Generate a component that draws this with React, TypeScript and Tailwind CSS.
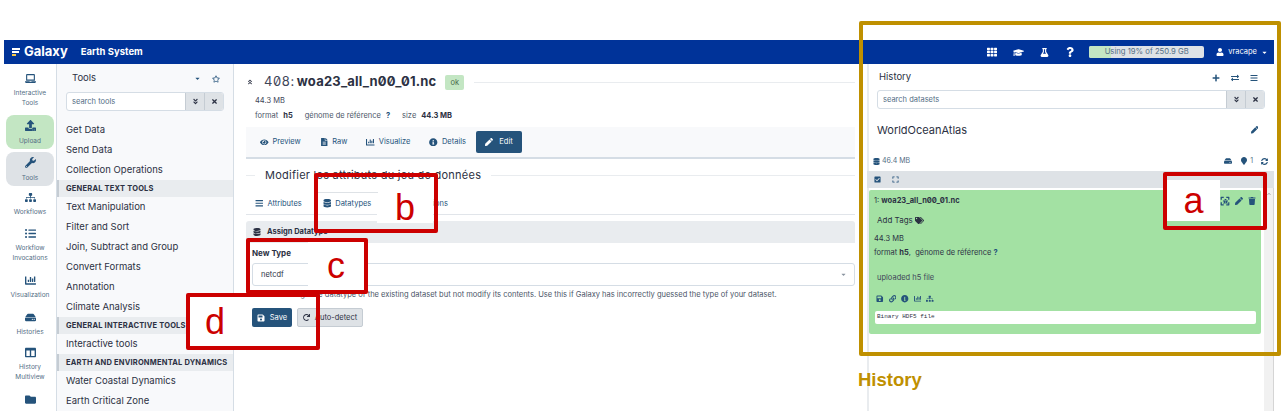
import type { ReactNode } from "react";
import {
  FaBars, FaChartBar, FaCheckSquare, FaChevronUp, FaColumns, FaDatabase, FaEye, FaFileAlt, FaFolder, FaGraduationCap, FaHdd, FaInfoCircle,
  FaLaptop, FaLink, FaMapMarker, FaPen, FaPlus, FaQuestion, FaRedo, FaSave, FaSitemap, FaSyncAlt, FaTags, FaTh, FaTimes, FaTrash, FaUndo,
  FaUpload, FaUser, FaListUl, FaRegStar, FaExchangeAlt, FaAngleDoubleDown, FaAngleDoubleUp, FaCaretDown, FaExpand, FaBug, FaFlask, FaWrench,
} from "react-icons/fa";

const toolRows: { label: string; section?: boolean }[] = [
  { label: "Get Data" },
  { label: "Send Data" },
  { label: "Collection Operations" },
  { label: "GENERAL TEXT TOOLS", section: true },
  { label: "Text Manipulation" },
  { label: "Filter and Sort" },
  { label: "Join, Subtract and Group" },
  { label: "Convert Formats" },
  { label: "Annotation" },
  { label: "Climate Analysis" },
  { label: "GENERAL INTERACTIVE TOOLS", section: true },
  { label: "Interactive tools" },
  { label: "EARTH AND ENVIRONMENTAL DYNAMICS", section: true },
  { label: "Water Coastal Dynamics" },
  { label: "Earth Critical Zone" },
];

function ActivityItem({ icon, lines, className = "" }: { icon: ReactNode; lines: string[]; className?: string }) {
  return (
    <div className={`mx-[2px] flex w-[48px] flex-col items-center rounded-[8px] text-[#25537b] ${className}`}>
      <span className="flex h-[14px] items-center text-[11px]">{icon}</span>
      <div className="mt-[3px] text-center text-[6.5px] leading-[10px] text-[#546e85]">
        {lines.map((line) => <div key={line}>{line}</div>)}
      </div>
    </div>
  );
}

function Tab({ icon, label, className = "" }: { icon: ReactNode; label: string; className?: string }) {
  return (
    <span className={`flex items-center gap-[4px] text-[7.5px] text-[#25537b] ${className}`}>
      <span className="text-[8.5px]">{icon}</span>
      {label}
    </span>
  );
}

function SearchBox({ placeholder }: { placeholder: string }) {
  return (
    <div className="flex h-[19px] overflow-hidden rounded-[3px] border border-[#d5dde5] bg-white">
      <span className="flex flex-1 items-center pl-[5px] text-[7.5px] text-[#546e85]">{placeholder}</span>
      <span className="flex w-[19px] items-center justify-center border-l border-[#c5ccd3] bg-[#dee2e6] text-[7px] text-[#2c3143]"><FaAngleDoubleDown /></span>
      <span className="flex w-[19px] items-center justify-center border-l border-[#c5ccd3] bg-[#dee2e6] text-[7px] text-[#2c3143]"><FaTimes /></span>
    </div>
  );
}

export default function App() {
  return (
    <div className="relative h-[411px] w-[1281px] overflow-hidden bg-white pl-[4px] pt-[40px] font-['Inter',sans-serif] text-[#2c3143]">
      <header className="flex h-[24px] w-[1270px] items-center bg-[#003399] text-white">
        <span className="ml-[8px] flex h-[8px] w-[8px] flex-col justify-between">
          <span className="h-[2px] w-[8px] bg-white" />
          <span className="h-[2px] w-[7px] bg-white" />
          <span className="h-[2px] w-[4px] bg-[#f7c948]" />
        </span>
        <span className="ml-[4px] text-[13px] font-bold">Galaxy</span>
        <span className="ml-[13px] text-[9.5px] font-bold">Earth System</span>
        <div className="ml-auto flex items-center">
          <FaTh className="text-[10px]" />
          <FaGraduationCap className="ml-[16px] text-[11px]" />
          <FaFlask className="ml-[16px] text-[9px]" />
          <FaQuestion className="ml-[16px] text-[10px]" />
          <div className="relative ml-[14px] flex h-[12px] w-[115px] items-center justify-center overflow-hidden rounded-[2px] bg-[#dee2e6] text-[7.7px] text-[#546e85]">
            <span className="absolute inset-y-0 left-0 w-[22px] bg-[#c3e6c3]" />
            <span className="relative">Using 19% of 250.9 GB</span>
          </div>
          <FaUser className="ml-[12px] text-[8px]" />
          <span className="ml-[4px] text-[7.5px]">vracape</span>
          <FaCaretDown className="ml-[4px] mr-[6px] text-[7px]" />
        </div>
      </header>

      <div className="flex h-[347px]">
        <nav className="w-[53px] border-r border-[#d5dde5] pt-[7px]">
          <ActivityItem icon={<FaLaptop />} lines={["Interactive", "Tools"]} />
          <ActivityItem icon={<FaUpload />} lines={["Upload"]} className="mt-[7px] h-[34px] justify-center bg-[#c3e6c3]" />
          <ActivityItem icon={<FaWrench />} lines={["Tools"]} className="mt-[3px] h-[34px] justify-center bg-[#dee2e6]" />
          <ActivityItem icon={<FaSitemap />} lines={["Workflows"]} className="mt-[4px]" />
          <ActivityItem icon={<FaListUl />} lines={["Workflow", "Invocations"]} className="mt-[9px]" />
          <ActivityItem icon={<FaChartBar />} lines={["Visualization"]} className="mt-[10px]" />
          <ActivityItem icon={<FaHdd />} lines={["Histories"]} className="mt-[10px]" />
          <ActivityItem icon={<FaColumns />} lines={["History", "Multiview"]} className="mt-[8px]" />
          <ActivityItem icon={<FaFolder />} lines={[]} className="mt-[10px]" />
        </nav>

        <aside className="w-[177px] border-r border-[#d5dde5] bg-[#f8f9fb]">
          <div className="flex h-[28px] items-center pl-[15px] pr-[13px] pt-[1px]">
            <span className="text-[9.5px]">Tools</span>
            <FaCaretDown className="ml-auto text-[7px] text-[#25537b]" />
            <FaRegStar className="ml-[11px] text-[8px] text-[#25537b]" />
          </div>
          <div className="ml-[9px] w-[158px]"><SearchBox placeholder="search tools" /></div>
          <div className="mt-[9px]">
            {toolRows.map((row) =>
              row.section ? (
                <div key={row.label} className="flex h-[17px] items-center whitespace-nowrap border-l-2 border-[#c5ccd3] bg-[#e9ecef] pl-[7px] text-[7.5px] font-bold tracking-[0.2px]">{row.label}</div>
              ) : (
                <div key={row.label} className="flex h-[20px] items-center pl-[9px] text-[9.5px]">{row.label}</div>
              )
            )}
          </div>
        </aside>

        <main className="w-[633px] px-[12px]">
          <div className="flex h-[36px] items-center">
            <FaAngleDoubleUp className="ml-[1px] text-[6px]" />
            <span className="ml-[11px] text-[13px] slashed-zero tracking-[0.6px] text-[#3f4659]">408:</span>
            <span className="ml-[2px] text-[13px] font-bold slashed-zero tracking-[0.2px]">woa23_all_n00_01.nc</span>
            <span className="ml-[9px] rounded-[2px] bg-[#c3e6c3] px-[5px] py-[3px] text-[7.5px] leading-[9px] text-[#4a6a4a]">ok</span>
            <span className="ml-[10px] h-px flex-1 bg-[#e9ecef]" />
          </div>
          <div className="-mt-[4px] ml-[9px] text-[7.5px] leading-[10px] text-[#3f4659]">44.3 MB</div>
          <div className="ml-[9px] mt-[5px] flex text-[7.5px] leading-[10px] text-[#4b5567]">
            <span>format</span><b className="ml-[5px] text-[#2c3143]">h5</b>
            <span className="ml-[12px]">génome de référence</span><b className="ml-[5px] text-[#25537b]">?</b>
            <span className="ml-[12px]">size</span><b className="ml-[5px] text-[#2c3143]">44.3 MB</b>
          </div>
          <div className="mt-[6px] flex h-[32px] items-center gap-[19px] border-b-2 border-[#d5dde5] bg-[#f8f9fb] pl-[14px]">
            <Tab icon={<FaEye />} label="Preview" />
            <Tab icon={<FaFileAlt />} label="Raw" />
            <Tab icon={<FaChartBar />} label="Visualize" />
            <Tab icon={<FaInfoCircle />} label="Details" />
            <span className="-ml-[9px] flex h-[22px] w-[46px] items-center justify-center gap-[6px] rounded-[2px] bg-[#25537b] text-[7.5px] text-white"><FaPen className="text-[8px]" />Edit</span>
          </div>
          <div className="mt-[8px] flex h-[17px] items-center">
            <span className="h-px w-[9px] bg-[#e9ecef]" />
            <span className="px-[10px] text-[11px] tracking-[0.25px]">Modifier les attributs du jeu de données</span>
            <span className="h-px flex-1 bg-[#e9ecef]" />
          </div>
          <div className="mt-[5px] flex h-[26px] items-center gap-[20px] border-b border-[#e1e5ea] pl-[9px] pt-[4px]">
            <Tab icon={<FaBars />} label="Attributes" />
            <Tab icon={<FaDatabase />} label="Datatypes" className="-mx-[6px] h-[22px] self-end border-x border-t border-[#dee2e6] px-[6px]" />
            <Tab icon={<FaUndo />} label="Permissions" />
          </div>
          <div className="mt-[6px] flex h-[22px] items-center gap-[6px] rounded-t-[3px] bg-[#e9ecef] pl-[7px] text-[7.5px] font-bold">
            <FaDatabase className="text-[8px]" />Assign Datatype
          </div>
          <div className="ml-[6px] mt-[5px] text-[8px] font-bold leading-[10px]">New Type</div>
          <div className="ml-[6px] mt-[5px] flex h-[23px] items-center justify-between rounded-[3px] border border-[#d5dde5] pl-[8px] pr-[7px] text-[7.5px]">
            netcdf <FaCaretDown className="text-[7px] text-[#8a94a0]" />
          </div>
          <p className="ml-[6px] mt-[4px] whitespace-nowrap text-[7.53px] leading-[10px] text-[#4b5567]">This will change the datatype of the existing dataset but not modify its contents. Use this if Galaxy has incorrectly guessed the type of your dataset.</p>
          <div className="ml-[6px] mt-[8px] flex gap-[5px]">
            <span className="flex h-[19px] w-[40px] items-center justify-center gap-[5px] rounded-[2px] bg-[#25537b] text-[7.5px] text-white"><FaSave className="text-[8px]" />Save</span>
            <span className="flex h-[19px] w-[66px] items-center justify-center gap-[5px] rounded-[2px] border border-[#c5ccd3] bg-[#dee2e6] text-[7.5px]"><FaRedo className="text-[7px]" />Auto-detect</span>
          </div>
        </main>

        <section className="relative w-[407px] border-l-2 border-[#e9ecef] pr-[10px]">
          <div className="flex h-[26px] items-center pl-[10px] pr-[6px] pt-[1px]">
            <span className="text-[9.5px]">History</span>
            <div className="ml-auto flex items-center gap-[11px] text-[8px] text-[#25537b]"><FaPlus /><FaExchangeAlt /><FaBars /></div>
          </div>
          <div className="ml-[8px] w-[388px]"><SearchBox placeholder="search datasets" /></div>
          <div className="flex h-[42px] items-center pl-[8px] pr-[6px] text-[11px]">
            WorldOceanAtlas
            <FaPen className="ml-auto text-[7.5px] text-[#25537b]" />
          </div>
          <div className="-mr-[4px] flex h-[20px] items-center pl-[4px] text-[7px] text-[#546e85]">
            <FaDatabase className="text-[#25537b]" /><span className="ml-[2px]">46.4 MB</span>
            <FaHdd className="ml-auto text-[8px] text-[#25537b]" />
            <FaMapMarker className="ml-[8px] text-[8px] text-[#25537b]" /><span className="ml-[2px]">1</span>
            <FaSyncAlt className="ml-[8px] text-[7px] text-[#25537b]" />
          </div>
          <div className="-ml-[2px] flex h-[17px] w-[407px] items-center gap-[11px] bg-[#dee2e6] pl-[7px] text-[7px] text-[#25537b]"><FaCheckSquare /><FaExpand /></div>

          <div className="mt-[2px] h-[144px] w-[392px] rounded-[2px] bg-[#a3e1a3] px-[5px] pt-[5px]">
            <div className="flex h-[12px] items-center text-[7.5px]">
              <span>1:&nbsp;</span><b className="slashed-zero">woa23_all_n00_01.nc</b>
              <div className="ml-auto flex items-center gap-[5px] text-[8px] text-[#25537b]">
                <span className="relative flex h-[10px] w-[10px] items-center justify-center text-[10px]"><FaExpand /><FaBug className="absolute text-[5px]" /></span>
                <FaPen /><FaTrash />
              </div>
            </div>
            <div className="ml-[3px] mt-[7px] flex h-[12px] items-center gap-[2px] text-[8px]">Add Tags <FaTags className="text-[9px]" /></div>
            <div className="mt-[8px] text-[7.5px] leading-[10px]">44.3 MB</div>
            <div className="mt-[4px] flex text-[7.5px] leading-[10px]">
              format&nbsp;<b>h5</b>,&nbsp;&nbsp;génome de référence&nbsp;<b className="text-[#25537b]">?</b>
            </div>
            <div className="ml-[3px] mt-[15px] text-[7.5px] leading-[10px] text-[#3f4659]">uploaded h5 file</div>
            <div className="ml-[2px] mt-[12px] flex items-center gap-[5px] text-[7.5px] text-[#25537b]"><FaSave /><FaLink /><FaInfoCircle /><FaChartBar /><FaSitemap /></div>
            <div className="ml-[1px] mt-[8px] h-[13px] w-[381px] rounded-[2px] bg-white pl-[2px] font-['Liberation_Mono',monospace] text-[6px] leading-[11px]">Binary HDF5 file</div>
          </div>

          <div className="absolute bottom-0 right-0 top-[124px] w-[10px] border-r border-[#d5d5d5] bg-[#f1f1f1]">
            <FaChevronUp className="mx-auto mt-[4px] text-[4px] text-[#a0a0a0]" />
          </div>
        </section>
      </div>

      {/* annotations drawn on top of the screenshot */}
      <div className="absolute left-[859px] top-[21px] h-[335px] w-[422px] rounded-[2px] border-4 border-[#bf9000]" />
      <div className="absolute left-[858px] top-[369px] font-['Liberation_Sans',sans-serif] text-[18.5px] font-bold leading-[22px] text-[#bf9000]">History</div>

      <div className="absolute left-[1167px] top-[180px] flex h-[41px] w-[53px] items-center justify-center bg-white font-['Liberation_Sans',sans-serif] text-[36px] text-[#cc0000]">a</div>
      <div className="absolute left-[1163px] top-[172px] h-[58px] w-[104px] rounded-[2px] border-4 border-[#cc0000]" />

      <div className="absolute left-[377px] top-[193px] flex h-[30px] w-[56px] items-center justify-center bg-white font-['Liberation_Sans',sans-serif] text-[36px] text-[#cc0000]">b</div>
      <div className="absolute left-[314px] top-[173px] h-[60px] w-[124px] rounded-[2px] border-4 border-[#cc0000]" />

      <div className="absolute left-[308px] top-[242px] flex h-[48px] w-[56px] items-center justify-center bg-white font-['Liberation_Sans',sans-serif] text-[36px] text-[#cc0000]">c</div>
      <div className="absolute left-[246px] top-[238px] h-[56px] w-[122px] rounded-[2px] border-4 border-[#cc0000]" />

      <div className="absolute left-[190px] top-[297px] flex h-[49px] w-[50px] items-center justify-center bg-white font-['Liberation_Sans',sans-serif] text-[36px] text-[#cc0000]">d</div>
      <div className="absolute left-[186px] top-[293px] h-[57px] w-[134px] rounded-[2px] border-4 border-[#cc0000]" />
    </div>
  );
}
